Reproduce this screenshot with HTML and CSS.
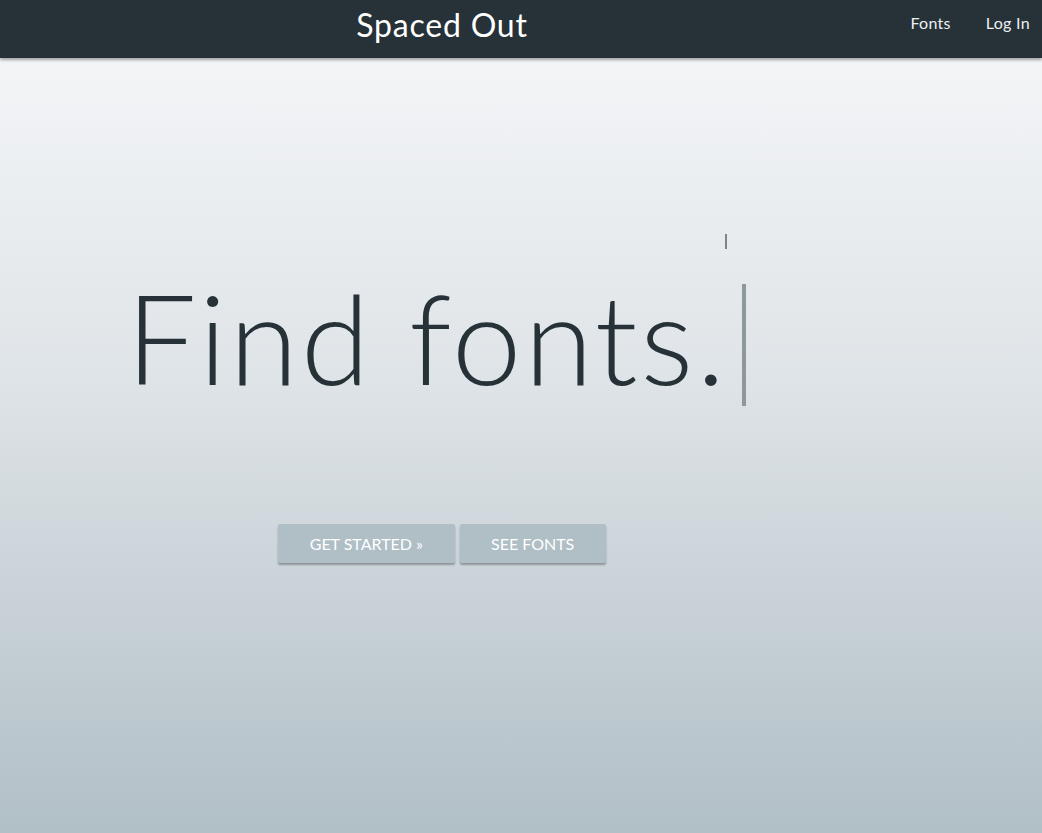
FILE: index.html
```html
<!DOCTYPE html>
<html lang="en">
<head>
<meta charset="utf-8">
<title>Spaced Out</title>
<link rel="stylesheet" href="styles.css">
</head>
<body>
<header class="navbar">
  <div class="brand-col"><a class="brand" href="#">Spaced Out</a></div>
  <nav class="nav">
    <a class="nav-link" href="#">Fonts</a>
    <a class="nav-link" href="#">Log In</a>
  </nav>
</header>
<main class="page">
  <section class="hero">
    <div class="hero-block">
      <div class="mini-line"><span class="mini-caret"></span></div>
      <h1 class="headline"><span class="typed">Find fonts.</span><span class="caret"></span></h1>
    </div>
    <div class="actions">
      <a class="btn" href="#">Get Started »</a>
      <a class="btn" href="#">See Fonts</a>
    </div>
  </section>
</main>
</body>
</html>
```

FILE: styles.css
```css
* { box-sizing: border-box; }
html, body { height: 100%; }
body {
  margin: 0;
  font-family: "Lato", "Open Sans", sans-serif;
  background: linear-gradient(to bottom, #f7f8fa 0%, #dfe4e8 45%, #b1bfc6 100%);
  min-height: 100vh;
  overflow: hidden;
}
a { text-decoration: none; }

.navbar {
  height: 58px;
  background: #263238;
  display: flex;
  align-items: stretch;
  box-shadow: 0 2px 3px rgba(0,0,0,0.35);
  position: relative;
  z-index: 1;
}
.brand-col {
  width: 884px;
  display: flex;
  justify-content: center;
  align-items: center;
}
.brand {
  color: #ffffff;
  font-size: 32px;
  font-weight: 400;
  letter-spacing: 0.8px;
  line-height: 1;
  margin-top: -8px;
}
.nav {
  flex: 1;
  display: flex;
  justify-content: flex-end;
  align-items: center;
  gap: 35px;
  padding-right: 12px;
}
.nav-link {
  color: #eceff1;
  font-size: 16px;
  letter-spacing: 0.3px;
  line-height: 1;
  margin-top: -12px;
}

.page {
  width: 884px;
}
.hero {
  display: flex;
  flex-direction: column;
  align-items: center;
  padding-top: 176px;
}
.hero-block {
  display: flex;
  flex-direction: column;
  margin-right: 12px;
}
.mini-line {
  height: 15px;
  display: flex;
  justify-content: flex-end;
  padding-right: 19px;
}
.mini-caret {
  width: 2px;
  height: 15px;
  background: #7b868c;
}
.headline {
  margin: 35px 0 0;
  display: flex;
  align-items: flex-start;
  font-weight: 300;
  font-size: 125px;
  color: #263238;
  letter-spacing: 2.7px;
}
.typed {
  line-height: 107px;
}
.caret {
  width: 4px;
  height: 122px;
  background: #8e979b;
  margin-left: 14px;
}
.actions {
  display: flex;
  gap: 5px;
  margin-top: 118px;
}
.btn {
  display: flex;
  align-items: center;
  justify-content: center;
  height: 39px;
  padding: 0 31.5px;
  background: #b0bec5;
  color: #ffffff;
  font-size: 16px;
  text-transform: uppercase;
  border-radius: 2px;
  box-shadow: 0 2px 2px rgba(0,0,0,0.3);
}
```
